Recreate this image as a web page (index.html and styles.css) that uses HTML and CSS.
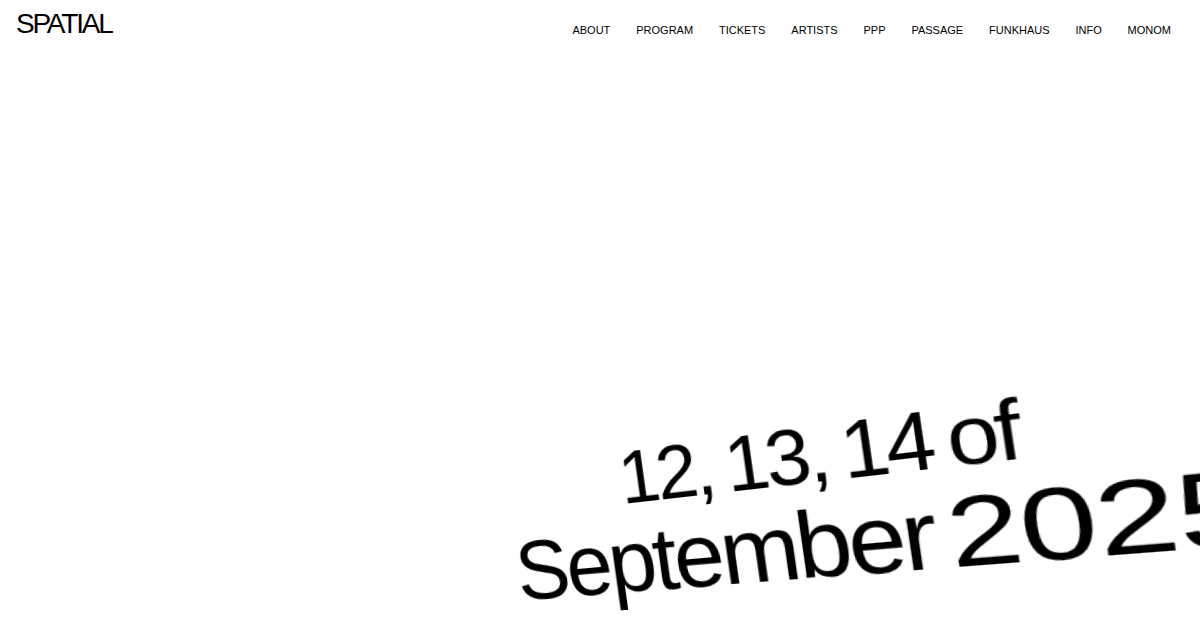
FILE: index.html
```html
<!DOCTYPE html>
<html lang="en">
<head>
<meta charset="utf-8">
<title>SPATIAL</title>
<link rel="stylesheet" href="styles.css">
</head>
<body>
<div class="page">
  <header class="header">
    <a class="logo" href="#">SPATIAL</a>
    <nav class="nav">
      <a href="#">ABOUT</a>
      <a href="#">PROGRAM</a>
      <a href="#">TICKETS</a>
      <a href="#">ARTISTS</a>
      <a href="#">PPP</a>
      <a href="#">PASSAGE</a>
      <a href="#">FUNKHAUS</a>
      <a href="#">INFO</a>
      <a href="#">MONOM</a>
    </nav>
  </header>
  <main class="hero">
    <h1 class="dates">
      <span class="line line-1">12, 13, 14 of</span>
      <span class="line line-2">September <span class="year">2025</span></span>
    </h1>
  </main>
</div>
</body>
</html>
```

FILE: styles.css
```css
html, body {
  margin: 0;
  padding: 0;
  background: #fff;
  color: #000;
  font-family: "Liberation Sans", Arial, Helvetica, sans-serif;
}

body {
  width: 1200px;
  height: 628px;
  overflow: hidden;
}

.page {
  display: flex;
  flex-direction: column;
  height: 628px;
}

a {
  color: #000;
  text-decoration: none;
}

.header {
  display: flex;
  justify-content: space-between;
  align-items: flex-start;
  padding: 8px 29px 0 16px;
}

.logo {
  font-size: 28px;
  line-height: 32px;
  letter-spacing: -2.2px;
}

.nav {
  display: flex;
  gap: 25.9px;
  font-size: 11px;
  line-height: 13px;
  padding-top: 16px;
}

.hero {
  flex: 1;
  display: flex;
  align-items: flex-end;
  padding: 0 0 15px 522px;
}

.dates {
  margin: 0;
  font-weight: 400;
  white-space: nowrap;
  transform-origin: 0 100%;
  transform: perspective(900px) rotateZ(-4deg) rotateY(-22deg) skewX(4deg);
}

.line {
  display: block;
  line-height: 1;
}

.line-1 {
  font-size: 70px;
  letter-spacing: -0.045em;
  word-spacing: -0.06em;
  padding-left: 118px;
  margin-bottom: 2px;
}

.line-2 {
  font-size: 84px;
  letter-spacing: -0.04em;
  word-spacing: -0.1em;
}

.year {
  display: inline-block;
  letter-spacing: -0.01em;
  transform-origin: 0 100%;
  transform: scaleX(1.16);
}
```
